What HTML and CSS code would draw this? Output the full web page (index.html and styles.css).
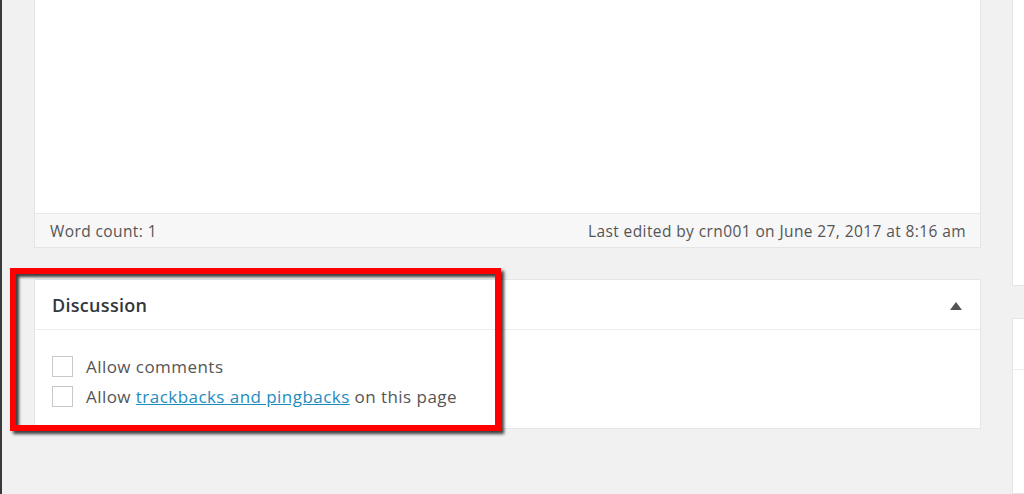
FILE: index.html
```html
<!DOCTYPE html>
<html>
<head>
<meta charset="utf-8">
<link rel="stylesheet" href="styles.css">
</head>
<body>
<div class="screen">
  <div class="edge"></div>
  <main class="main">
    <section class="editor">
      <div class="editor-body"></div>
      <div class="editor-footer">
        <span>Word count: 1</span>
        <span>Last edited by crn001 on June 27, 2017 at 8:16 am</span>
      </div>
    </section>
    <section class="box">
      <div class="box-head">
        <h2 class="box-title">Discussion</h2>
        <span class="toggle"></span>
      </div>
      <div class="box-body">
        <label class="opt"><span class="check"></span>Allow comments</label>
        <label class="opt"><span class="check"></span>Allow&nbsp;<a href="#" class="link">trackbacks and pingbacks</a>&nbsp;on this page</label>
      </div>
    </section>
    <div class="highlight"></div>
  </main>
  <aside class="side">
    <div class="side-box side-top"></div>
    <div class="side-box side-bottom"><div class="side-head"></div></div>
  </aside>
</div>
</body>
</html>
```

FILE: styles.css
```css
html, body {
  margin: 0;
  padding: 0;
}
body {
  background: #f1f1f1;
  font-family: "Open Sans", "Noto Sans", sans-serif;
  color: #555d66;
  overflow: hidden;
}
.screen {
  display: flex;
  width: 1024px;
  height: 494px;
  overflow: hidden;
}
.edge {
  width: 2px;
  flex: none;
  background: #3a3a3a;
}
.main {
  position: relative;
  flex: none;
  width: 947px;
  margin-left: 32px;
  display: flex;
  flex-direction: column;
  gap: 31px;
}
.editor {
  background: #fff;
  border: 1px solid #e5e5e5;
  border-top: none;
}
.editor-body {
  height: 213px;
}
.editor-footer {
  display: flex;
  justify-content: space-between;
  align-items: center;
  height: 33px;
  padding: 0 14px 0 15px;
  background: #f7f7f7;
  border-top: 1px solid #e8e8e8;
  font-size: 15.5px;
  letter-spacing: 0.4px;
  color: #555;
}
.box {
  background: #fff;
  border: 1px solid #e5e5e5;
}
.box-head {
  display: flex;
  align-items: center;
  justify-content: space-between;
  height: 49px;
  padding: 0 18px 0 17px;
  border-bottom: 1px solid #eee;
}
.box-title {
  margin: 0;
  font-size: 18px;
  font-weight: 600;
  letter-spacing: 0.3px;
  color: #32373c;
}
.toggle {
  width: 0;
  height: 0;
  border-left: 6px solid transparent;
  border-right: 6px solid transparent;
  border-bottom: 8px solid #555;
  margin-top: 2px;
}
.box-body {
  display: flex;
  flex-direction: column;
  gap: 9px;
  padding: 26px 17px 21px;
}
.opt {
  display: flex;
  align-items: center;
  height: 21px;
  font-size: 17px;
  letter-spacing: 0.45px;
  color: #555;
}
.check {
  width: 19px;
  height: 19px;
  border: 1px solid #c8c8c8;
  margin-right: 13px;
  background: #fff;
  flex: none;
}
.link {
  color: #1e8cbe;
  text-decoration: underline;
}
.highlight {
  position: absolute;
  left: -24px;
  top: 268px;
  width: 479px;
  height: 151px;
  border: 6px solid #ff0000;
  box-shadow: 3px 3px 3px rgba(0,0,0,0.75), inset 3px 3px 3px rgba(0,0,0,0.75);
}
.side {
  flex: none;
  width: 20px;
  margin-left: 31px;
  display: flex;
  flex-direction: column;
  gap: 32px;
}
.side-box {
  background: #fff;
  border: 1px solid #e5e5e5;
}
.side-top {
  height: 285px;
  border-top: none;
}
.side-bottom {
  flex: 1;
}
.side-head {
  height: 50px;
  border-bottom: 1px solid #eee;
}
```
